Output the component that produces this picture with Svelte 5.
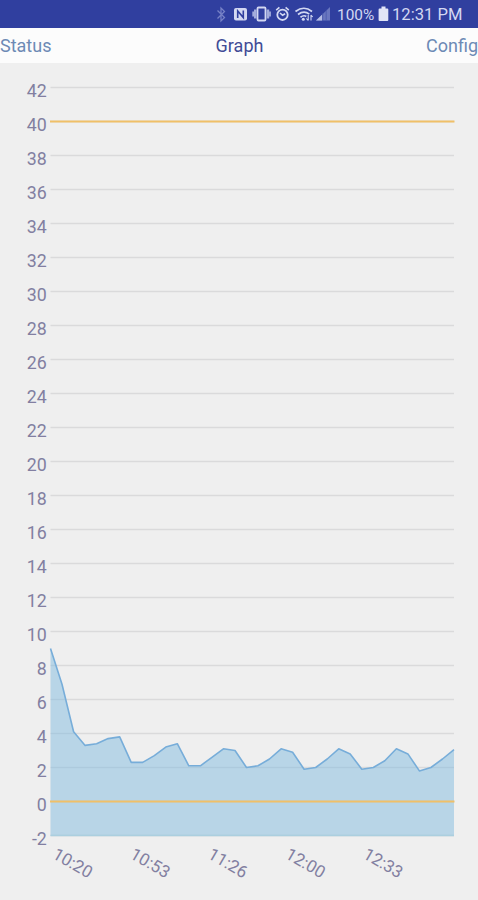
<!--
  Graph screen: status bar, pager tabs and an area chart of recent readings
  with a lower and an upper limit line.
-->
<script>
    const tabs = ['Status', 'Graph', 'Config'];
    const active = 'Graph';

    const readings = [
        9, 6.9, 4.1, 3.3, 3.4, 3.7, 3.8, 2.3, 2.3, 2.7, 3.2, 3.4,
        2.1, 2.1, 2.6, 3.1, 3.0, 2.0, 2.1, 2.5, 3.1, 2.9, 1.9, 2.0,
        2.5, 3.1, 2.8, 1.9, 2.0, 2.4, 3.1, 2.8, 1.8, 2.0, 2.5, 3.05,
    ];
    const times = ['10:20', '10:53', '11:26', '12:00', '12:33'];
    const limits = [0, 40];

    const min = -2;
    const max = 42;
    const left = 50.5;
    const right = 454;
    const top = 24.5;
    const unit = 17;

    /** @param {number} v */
    const y = (v) => top + (max - v) * unit;
    /** @param {number} i */
    const x = (i) => left + (i * (right - left)) / (readings.length - 1);

    const ticks = Array.from({ length: (max - min) / 2 + 1 }, (_, i) => max - i * 2);
    const line = readings.map((v, i) => `${x(i).toFixed(1)},${y(v).toFixed(1)}`).join(' ');
    const area = `${left},${y(min)} ${line} ${right},${y(min)}`;
</script>

<div class="screen">
    <header class="status-bar">
        <svg class="icons" width="122" height="28" viewBox="0 0 122 28" fill="none">
            <!-- bluetooth -->
            <path d="M2.500 10.500l7 7-3.500 3.500V8l3.500 3.500-7 7" stroke="#7681c6" stroke-width="1.3" />
            <!-- nfc -->
            <rect x="19" y="8" width="13" height="12.500" rx="2" fill="#d3d8f2" />
            <path d="M22.700 18v-7l5.600 6.500v-7" stroke="#303f9f" stroke-width="1.600" />
            <!-- vibrate -->
            <rect x="42.500" y="7.500" width="8" height="13" rx="1" stroke="#d3d8f2" stroke-width="1.800" />
            <path d="M40.300 9.500v9M52.900 9.500v9" stroke="#a4addc" stroke-width="2.600" />
            <path d="M38.200 11.500v5M55 11.500v5" stroke="#a4addc" stroke-width="1.800" />
            <!-- alarm -->
            <circle cx="67.500" cy="14.800" r="5.200" stroke="#d3d8f2" stroke-width="1.800" />
            <path d="M61.200 10.200l3.200-2.800M73.800 10.200l-3.200-2.800M65 13l2.600 2.300 2.500-1.500" stroke="#d3d8f2" stroke-width="1.600" />
            <!-- wifi -->
            <path d="M80.500 11.500q8.500-6.500 16.500 0M83 14.500q6-4.400 11.300-.4M85.500 17.200q3.300-2.500 5.800-.7" stroke="#d3d8f2" stroke-width="1.700" />
            <circle cx="88.300" cy="19.300" r="1.500" fill="#d3d8f2" />
            <path d="M93.200 15v5.500m-1.800-2l1.800 2M96 20.500V15m1.700 2L96 15" stroke="#d3d8f2" stroke-width="1.100" />
            <!-- signal -->
            <path d="M101 20.500L115 7v13.500z" fill="#6976bf" />
            <path d="M101 20.500l6-5.800v5.800z" fill="#b5bde5" />
            <path d="M107.700 13v8M111.200 9.500v11" stroke="#4453aa" stroke-width=".7" />
        </svg>
        <span class="percent">100%</span>
        <svg class="battery" width="11" height="28" viewBox="0 0 11 28">
            <path d="M3.500 6.500h4v2h1.800q1 0 1 1v10.500q0 1-1 1H1.600q-1 0-1-1V9.500q0-1 1-1h1.900z" fill="#e0e4f7" />
        </svg>
        <span class="clock">12:31 PM</span>
    </header>

    <nav class="tabs">
        {#each tabs as tab}
            <span class="tab" class:active={tab === active}>{tab}</span>
        {/each}
    </nav>

    <main>
        <svg class="chart" width="478" height="837" viewBox="0 0 478 837">
            {#each ticks as t}
                <line class="grid" x1={left} x2={right} y1={y(t)} y2={y(t)} />
                <text class="label" x="46.8" y={y(t) + 9.5} text-anchor="end">{t}</text>
            {/each}

            <polygon class="area" points={area} />
            <line class="base" x1={left} x2={right} y1={y(min)} y2={y(min)} />
            <polyline class="line" points={line} />

            {#each limits as limit}
                <line class="limit" x1={left - 0.5} x2={right + 0.5} y1={y(limit)} y2={y(limit)} />
            {/each}

            {#each times as time, i}
                <text class="label time" transform="translate({51.5 + i * 77.6} 794.5) rotate(30)">{time}</text>
            {/each}
        </svg>
    </main>
</div>

<style>
    :global(body) {
        background: #efefef;
    }

    .screen {
        width: 478px;
        height: 900px;
        overflow: hidden;
        display: flex;
        flex-direction: column;
        background: #efefef;
        font-family: Roboto, sans-serif;
    }

    /* ── Status bar ── */
    .status-bar {
        display: flex;
        align-items: center;
        justify-content: flex-end;
        flex: none;
        height: 28px;
        padding-right: 16px;
        background: #303f9f;
        color: #d3d8f2;
        line-height: 28px;
        white-space: nowrap;
    }
    .icons,
    .battery {
        display: block;
        flex: none;
    }
    .percent {
        width: 41px;
        font-size: 15.4px;
        padding-top: 2px;
    }
    .clock {
        width: 70px;
        margin-left: 3px;
        font-size: 16.6px;
        padding-top: 2px;
    }

    /* ── Tabs ── */
    .tabs {
        display: grid;
        grid-template-columns: 1fr auto 1fr;
        align-items: center;
        flex: none;
        height: 35px;
        background: #fcfcfc;
        font-size: 18px;
        line-height: 36px;
    }
    .tab {
        color: #6d8ab5;
    }
    .tab:last-child {
        text-align: right;
    }
    .tab.active {
        color: #414b96;
        padding-left: 1px;
    }

    /* ── Chart ── */
    .chart {
        display: block;
    }
    .grid {
        stroke: #dadadb;
        stroke-width: 1.4;
    }
    .label {
        fill: #827fa1;
        font-size: 17.8px;
    }
    .time {
        font-size: 17px;
    }
    .area {
        fill: #7bb8df;
        fill-opacity: 0.47;
    }
    .base {
        stroke: #abcfdf;
        stroke-width: 1.5;
    }
    .line {
        fill: none;
        stroke: #77add9;
        stroke-width: 1.6;
        stroke-linejoin: round;
    }
    .limit {
        stroke: #f0c068;
        stroke-width: 2.2;
    }
</style>
